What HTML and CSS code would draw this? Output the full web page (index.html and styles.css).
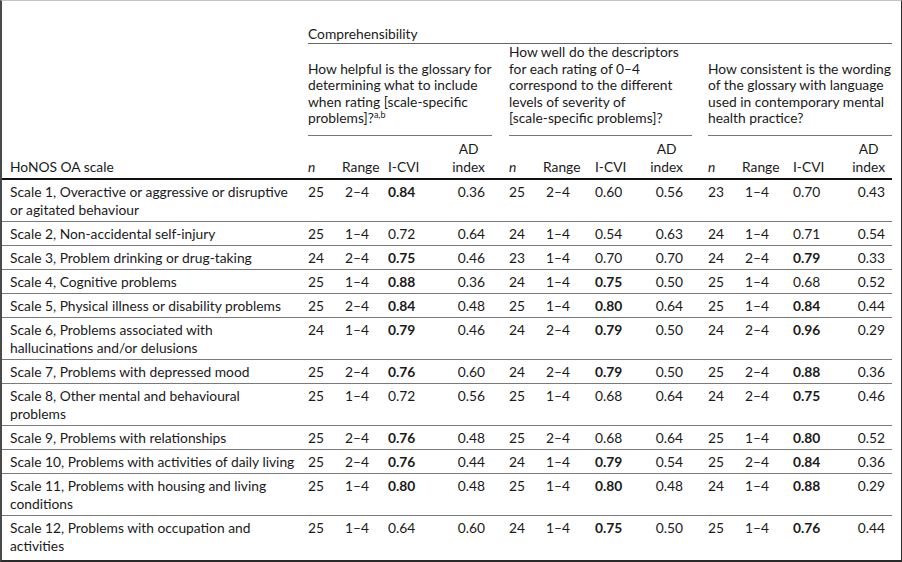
FILE: index.html
```html
<!DOCTYPE html>
<html lang="en">
<head>
<meta charset="utf-8">
<title>HoNOS OA glossary comprehensibility</title>
<link rel="stylesheet" href="styles.css">
</head>
<body>
<div class="frame">
<table class="data">
<colgroup>
<col class="c-label">
<col class="c-n"><col class="c-range"><col class="c-icvi1"><col class="c-ad1">
<col class="c-gap1">
<col class="c-n"><col class="c-range"><col class="c-icvi2"><col class="c-ad2">
<col class="c-gap2">
<col class="c-n"><col class="c-range"><col class="c-icvi3"><col class="c-ad3">
</colgroup>
<thead>
<tr class="comp-row">
<th></th>
<th class="comp" colspan="14">Comprehensibility</th>
</tr>
<tr class="q-row">
<th></th>
<th class="q" colspan="4">How helpful is the glossary for<br>determining what to include<br>when rating [scale-specific<br>problems]?<sup>a,b</sup></th>
<th class="gap"></th>
<th class="q" colspan="4">How well do the descriptors<br>for each rating of 0–4<br>correspond to the different<br>levels of severity of<br>[scale-specific problems]?</th>
<th class="gap"></th>
<th class="q" colspan="4">How consistent is the wording<br>of the glossary with language<br>used in contemporary mental<br>health practice?</th>
</tr>
<tr class="col-row">
<th>HoNOS OA scale</th>
<th><i>n</i></th><th>Range</th><th>I-CVI</th><th><span class="ad-h">AD<br>index</span></th>
<th></th>
<th><i>n</i></th><th>Range</th><th>I-CVI</th><th><span class="ad-h">AD<br>index</span></th>
<th></th>
<th><i>n</i></th><th>Range</th><th>I-CVI</th><th><span class="ad-h">AD<br>index</span></th>
</tr>
</thead>
<tbody>
<tr><td>Scale 1, Overactive or aggressive or disruptive<br>or agitated behaviour</td><td>25</td><td>2–4</td><td><b>0.84</b></td><td>0.36</td><td></td><td>25</td><td>2–4</td><td>0.60</td><td>0.56</td><td></td><td>23</td><td>1–4</td><td>0.70</td><td>0.43</td></tr>
<tr><td>Scale 2, Non-accidental self-injury</td><td>25</td><td>1–4</td><td>0.72</td><td>0.64</td><td></td><td>24</td><td>1–4</td><td>0.54</td><td>0.63</td><td></td><td>24</td><td>1–4</td><td>0.71</td><td>0.54</td></tr>
<tr><td>Scale 3, Problem drinking or drug-taking</td><td>24</td><td>2–4</td><td><b>0.75</b></td><td>0.46</td><td></td><td>23</td><td>1–4</td><td>0.70</td><td>0.70</td><td></td><td>24</td><td>2–4</td><td><b>0.79</b></td><td>0.33</td></tr>
<tr><td>Scale 4, Cognitive problems</td><td>25</td><td>1–4</td><td><b>0.88</b></td><td>0.36</td><td></td><td>24</td><td>1–4</td><td><b>0.75</b></td><td>0.50</td><td></td><td>25</td><td>1–4</td><td>0.68</td><td>0.52</td></tr>
<tr><td>Scale 5, Physical illness or disability problems</td><td>25</td><td>2–4</td><td><b>0.84</b></td><td>0.48</td><td></td><td>25</td><td>1–4</td><td><b>0.80</b></td><td>0.64</td><td></td><td>25</td><td>1–4</td><td><b>0.84</b></td><td>0.44</td></tr>
<tr><td>Scale 6, Problems associated with<br>hallucinations and/or delusions</td><td>24</td><td>1–4</td><td><b>0.79</b></td><td>0.46</td><td></td><td>24</td><td>2–4</td><td><b>0.79</b></td><td>0.50</td><td></td><td>24</td><td>2–4</td><td><b>0.96</b></td><td>0.29</td></tr>
<tr><td>Scale 7, Problems with depressed mood</td><td>25</td><td>2–4</td><td><b>0.76</b></td><td>0.60</td><td></td><td>24</td><td>2–4</td><td><b>0.79</b></td><td>0.50</td><td></td><td>25</td><td>2–4</td><td><b>0.88</b></td><td>0.36</td></tr>
<tr><td>Scale 8, Other mental and behavioural<br>problems</td><td>25</td><td>1–4</td><td>0.72</td><td>0.56</td><td></td><td>25</td><td>1–4</td><td>0.68</td><td>0.64</td><td></td><td>24</td><td>2–4</td><td><b>0.75</b></td><td>0.46</td></tr>
<tr><td>Scale 9, Problems with relationships</td><td>25</td><td>2–4</td><td><b>0.76</b></td><td>0.48</td><td></td><td>25</td><td>2–4</td><td>0.68</td><td>0.64</td><td></td><td>25</td><td>1–4</td><td><b>0.80</b></td><td>0.52</td></tr>
<tr><td>Scale 10, Problems with activities of daily living</td><td>25</td><td>2–4</td><td><b>0.76</b></td><td>0.44</td><td></td><td>24</td><td>1–4</td><td><b>0.79</b></td><td>0.54</td><td></td><td>25</td><td>2–4</td><td><b>0.84</b></td><td>0.36</td></tr>
<tr><td>Scale 11, Problems with housing and living<br>conditions</td><td>25</td><td>1–4</td><td><b>0.80</b></td><td>0.48</td><td></td><td>25</td><td>1–4</td><td><b>0.80</b></td><td>0.48</td><td></td><td>24</td><td>1–4</td><td><b>0.88</b></td><td>0.29</td></tr>
<tr><td>Scale 12, Problems with occupation and<br>activities</td><td>25</td><td>1–4</td><td>0.64</td><td>0.60</td><td></td><td>24</td><td>1–4</td><td><b>0.75</b></td><td>0.50</td><td></td><td>25</td><td>1–4</td><td><b>0.76</b></td><td>0.44</td></tr>
</tbody>
</table>
</div>
</body>
</html>
```
FILE: styles.css
```css
html, body {
  margin: 0;
  padding: 0;
  background: #ffffff;
}

.frame {
  width: 902px;
  height: 562px;
  box-sizing: border-box;
  border-left: 2px solid #4a4a4a;
  border-top: 1px solid #c4c4c4;
  border-right: 1px solid #2a2a2a;
  border-bottom: 2px solid #2a2a2a;
  overflow: hidden;
  font-family: Lato, "Liberation Sans", sans-serif;
  font-size: 13.8px;
  color: #1a1a1a;
}

.data {
  border-collapse: collapse;
  table-layout: fixed;
  width: 890px;
}

.c-label { width: 306px; }
.c-n { width: 34px; }
.c-range { width: 30px; }
.c-icvi1 { width: 72px; }
.c-ad1 { width: 48px; }
.c-gap1 { width: 17px; }
.c-icvi2 { width: 74px; }
.c-ad2 { width: 45px; }
.c-gap2 { width: 16px; }
.c-icvi3 { width: 68px; }
.c-ad3 { width: 52px; }

.data th,
.data td {
  padding: 0;
  font-weight: normal;
  text-align: left;
  vertical-align: top;
  line-height: 18px;
  white-space: nowrap;
}

.data b {
  font-weight: bold;
}

/* header rows */
.comp-row .comp {
  padding-top: 24px;
  border-bottom: 1px solid #666;
}

.q-row th {
  vertical-align: bottom;
}

.q-row .q {
  line-height: 16.5px;
  padding-bottom: 8px;
  border-bottom: 1px solid #777;
}

.q-row sup {
  font-size: 9px;
  line-height: 0;
  vertical-align: 5px;
}

.col-row th {
  vertical-align: bottom;
  padding-top: 4px;
  padding-bottom: 2px;
  border-bottom: 2px solid #111;
}

.ad-h {
  display: inline-block;
  text-align: center;
}

/* body rows */
.data tbody td {
  padding-top: 3px;
  padding-bottom: 2px;
  border-bottom: 1px solid #7a7a7a;
}

.data tbody tr:last-child td {
  border-bottom: none;
}

/* column placement (shared by header and body rows) */
.col-row th:nth-child(1),
.data tbody td:nth-child(1) {
  padding-left: 8px;
}

.col-row th:nth-child(3),
.col-row th:nth-child(8),
.col-row th:nth-child(13),
.data tbody td:nth-child(3),
.data tbody td:nth-child(8),
.data tbody td:nth-child(13) {
  text-align: center;
}

.col-row th:nth-child(4),
.data tbody td:nth-child(4) { padding-left: 16px; }
.col-row th:nth-child(9),
.data tbody td:nth-child(9) { padding-left: 22px; }
.col-row th:nth-child(14),
.data tbody td:nth-child(14) { padding-left: 21px; }

.col-row th:nth-child(5),
.col-row th:nth-child(10),
.col-row th:nth-child(15),
.data tbody td:nth-child(5),
.data tbody td:nth-child(10),
.data tbody td:nth-child(15) {
  text-align: right;
}

.col-row th:nth-child(5),
.data tbody td:nth-child(5) { padding-right: 7px; }
.col-row th:nth-child(10),
.data tbody td:nth-child(10) { padding-right: 9px; }
.col-row th:nth-child(15),
.data tbody td:nth-child(15) { padding-right: 7px; }
```
